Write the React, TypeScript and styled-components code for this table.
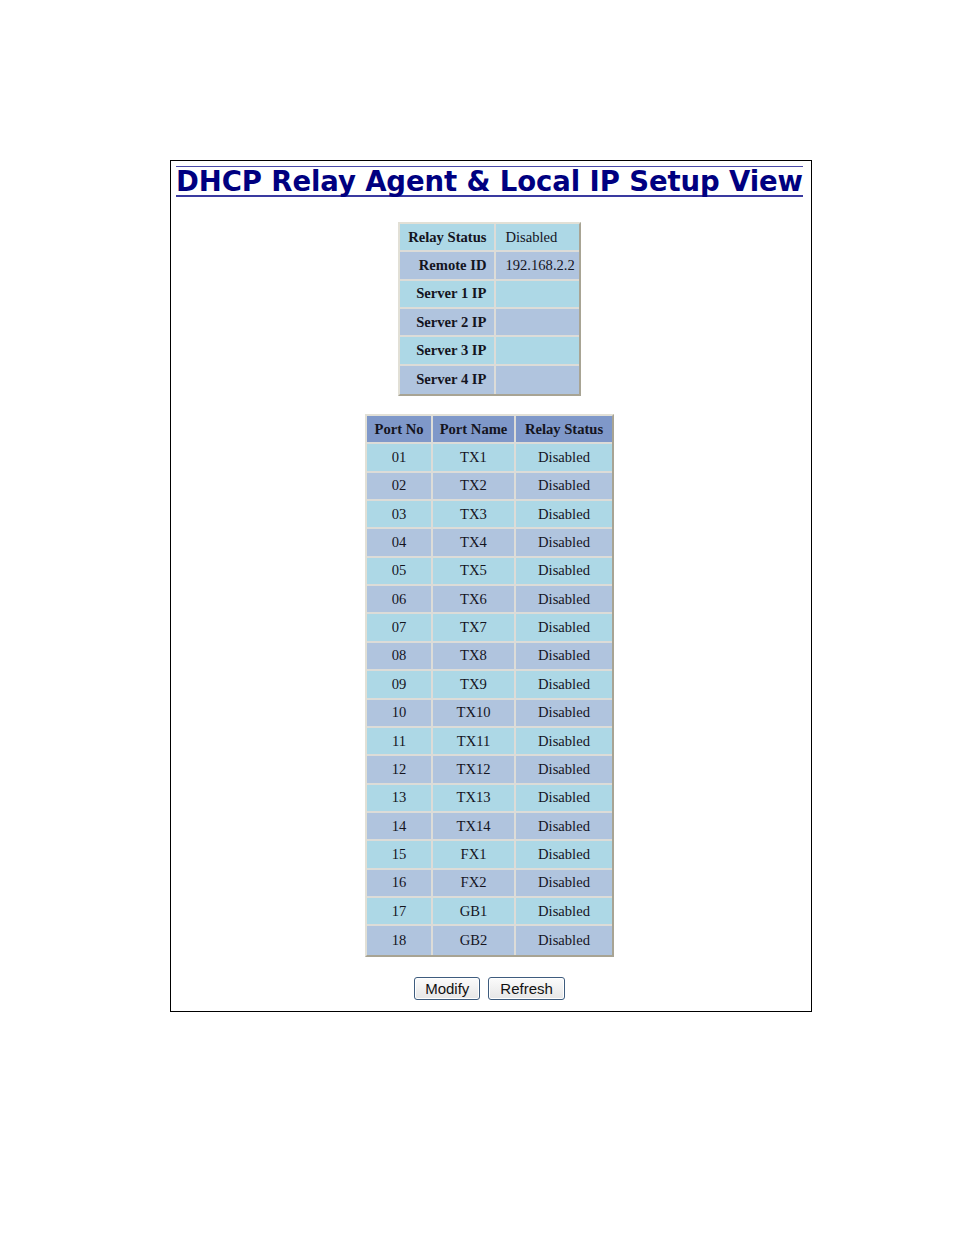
import React from "react";
import styled, { createGlobalStyle } from "styled-components";

const Global = createGlobalStyle`
  html, body { margin: 0; padding: 0; background: #ffffff; }
  body { font-family: "Liberation Serif", "Times New Roman", serif; }
`;

const Page = styled.div`
  width: 954px;
  min-height: 1235px;
  padding: 160px 0 0 170px;
  box-sizing: border-box;
`;

const Frame = styled.div`
  width: 642px;
  height: 852px;
  box-sizing: border-box;
  border: 1px solid #000;
  display: flex;
  flex-direction: column;
  align-items: center;
  padding: 5px 3px 0 0;
`;

const Title = styled.h1`
  margin: 0;
  font-family: "DejaVu Sans", Verdana, sans-serif;
  font-weight: bold;
  font-size: 27.5px;
  line-height: 28px;
  color: #000080;
  border-top: 1px solid #4a4aa8;
  border-bottom: 2px solid #3a3aa0;
  padding: 0;
  white-space: nowrap;
  letter-spacing: -0.1px;
`;

const Table = styled.table<{ $mt: number }>`
  margin-top: ${(p) => p.$mt}px;
  border-collapse: separate;
  border-spacing: 0;
  border: 2px solid;
  border-color: #e2e0d6 #a8a494 #a8a494 #e2e0d6;
  background: #ebebe6;
`;

const Cell = styled.td<{ $bg: string; $align: string; $bold?: boolean; $w: number }>`
  background: ${(p) => p.$bg};
  text-align: ${(p) => p.$align};
  font-weight: ${(p) => (p.$bold ? "bold" : "normal")};
  width: ${(p) => p.$w}px;
  height: 28.35px;
  padding: ${(p) =>
    p.$align === "center" ? "0 3px" : p.$align === "left" ? "0 4px 0 9px" : "0 8px"};
  box-sizing: border-box;
  font-size: 14.6px;
  color: #14141e;
  border-right: 2px solid #dcdcd8;
  border-bottom: 2px solid #dcdcd8;
  white-space: nowrap;
  &:last-child { border-right: none; }
  tr:last-child > & { border-bottom: none; }
`;

const ButtonRow = styled.div`
  margin-top: 20px;
  display: flex;
  gap: 8px;
`;

const Button = styled.button<{ $px: number }>`
  font-family: "Liberation Sans", Arial, sans-serif;
  font-size: 15px;
  color: #111;
  height: 23px;
  padding: 0 ${(p) => p.$px}px;
  border: 1px solid #3e5c7e;
  border-radius: 3px;
  background: linear-gradient(#fbfbfb, #e6e6e6);
  box-shadow: inset 0 0 0 1px #ffffff;
  cursor: pointer;
`;

const LIGHT = "#add8e6";
const STEEL = "#b0c4de";
const HEAD = "#7f98c9";

const info: [string, string][] = [
  ["Relay Status", "Disabled"],
  ["Remote ID", "192.168.2.2"],
  ["Server 1 IP", ""],
  ["Server 2 IP", ""],
  ["Server 3 IP", ""],
  ["Server 4 IP", ""],
];

const names = [
  "TX1", "TX2", "TX3", "TX4", "TX5", "TX6", "TX7", "TX8", "TX9",
  "TX10", "TX11", "TX12", "TX13", "TX14", "FX1", "FX2", "GB1", "GB2",
];

export default function App() {
  return (
    <>
      <Global />
      <Page>
        <Frame>
          <Title>DHCP Relay Agent &amp; Local IP Setup View</Title>
          <Table $mt={25}>
            <tbody>
              {info.map(([k, v], i) => (
                <tr key={k}>
                  <Cell $bg={i % 2 ? STEEL : LIGHT} $align="right" $bold $w={96}>
                    {k}
                  </Cell>
                  <Cell $bg={i % 2 ? STEEL : LIGHT} $align="left" $w={81}>
                    {v}
                  </Cell>
                </tr>
              ))}
            </tbody>
          </Table>
          <Table $mt={18}>
            <tbody>
              <tr>
                <Cell $bg={HEAD} $align="center" $bold $w={66}>Port No</Cell>
                <Cell $bg={HEAD} $align="center" $bold $w={83}>Port Name</Cell>
                <Cell $bg={HEAD} $align="center" $bold $w={96}>Relay Status</Cell>
              </tr>
              {names.map((n, i) => (
                <tr key={n}>
                  <Cell $bg={i % 2 ? STEEL : LIGHT} $align="center" $w={66}>
                    {String(i + 1).padStart(2, "0")}
                  </Cell>
                  <Cell $bg={i % 2 ? STEEL : LIGHT} $align="center" $w={83}>
                    {n}
                  </Cell>
                  <Cell $bg={i % 2 ? STEEL : LIGHT} $align="center" $w={96}>
                    Disabled
                  </Cell>
                </tr>
              ))}
            </tbody>
          </Table>
          <ButtonRow>
            <Button $px={10}>Modify</Button>
            <Button $px={11}>Refresh</Button>
          </ButtonRow>
        </Frame>
      </Page>
    </>
  );
}
